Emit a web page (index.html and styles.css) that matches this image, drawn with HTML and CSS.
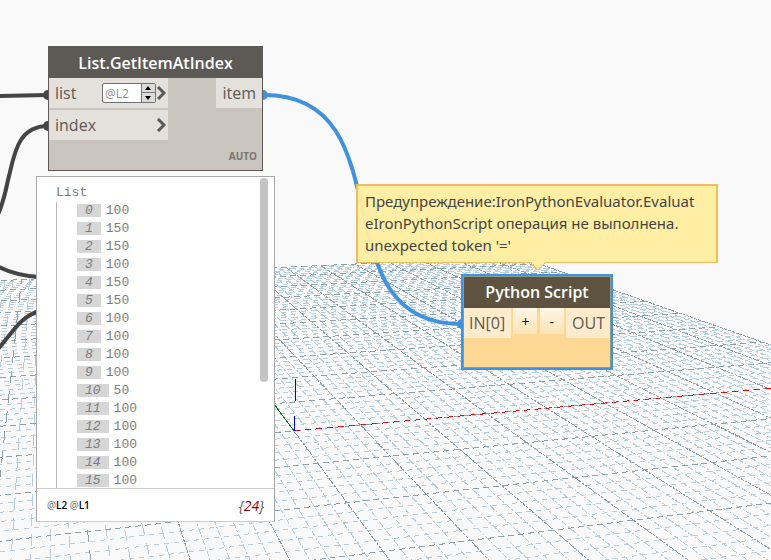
FILE: index.html
```html
<!DOCTYPE html>
<html lang="ru">
<head>
  <meta charset="utf-8">
  <title>Dynamo</title>
  <link rel="stylesheet" href="styles.css">
</head>
<body>
  <main class="workspace">
    <svg class="grid" id="grid" aria-hidden="true"></svg>

    <svg class="wires" aria-hidden="true">
      <path class="wire" d="M-2 96 L48 95" />
      <path class="wire" d="M48 126 C16 126 14 158 8 180 C5 195 2 206 -3 217" />
      <path class="wire" d="M-3 266 C8 272 20 276 40 277" />
      <path class="wire" d="M-3 350 C12 334 20 316 40 311" />
      <circle class="pin" cx="48" cy="95" r="5" />
      <circle class="pin" cx="48" cy="126" r="5" />
      <path class="wire active" d="M264 95 C409 95 316 324 461 324" />
      <circle class="pin active" cx="263" cy="95" r="5" />
      <circle class="pin active" cx="462" cy="324" r="5" />
    </svg>

    <section class="node list-node">
      <h2>List.GetItemAtIndex</h2>
      <div class="ports">
        <div class="inputs">
          <div class="port">
            <label for="level">list</label>
            <div class="spinner">
              <input type="text" id="level" value="@L2">
              <div class="steps">
                <button type="button" aria-label="Up"><svg viewBox="0 0 12 8"><path d="M3 6 L6 2 L9 6 Z" /></svg></button>
                <button type="button" aria-label="Down"><svg viewBox="0 0 12 8"><path d="M3 2 L6 6 L9 2 Z" /></svg></button>
              </div>
            </div>
            <svg class="chevron" viewBox="0 0 10 14"><path d="M2 1 L8 7 L2 13" /></svg>
          </div>
          <div class="port">
            <span>index</span>
            <svg class="chevron" viewBox="0 0 10 14"><path d="M2 1 L8 7 L2 13" /></svg>
          </div>
        </div>
        <div class="port">item</div>
      </div>
      <div class="lacing">AUTO</div>
    </section>

    <section class="preview">
      <div class="tree">
        <div class="root">List</div>
        <ul>
          <li><i>0</i>100</li>
          <li><i>1</i>150</li>
          <li><i>2</i>150</li>
          <li><i>3</i>100</li>
          <li><i>4</i>150</li>
          <li><i>5</i>150</li>
          <li><i>6</i>100</li>
          <li><i>7</i>100</li>
          <li><i>8</i>100</li>
          <li><i>9</i>100</li>
          <li><i>10</i>50</li>
          <li><i>11</i>100</li>
          <li><i>12</i>100</li>
          <li><i>13</i>100</li>
          <li><i>14</i>100</li>
          <li><i>15</i>100</li>
        </ul>
        <div class="thumb"></div>
      </div>
      <footer>
        <div class="levels"><span>@</span>L2 <span>@</span>L1</div>
        <div class="count">{<b>24</b>}</div>
      </footer>
    </section>

    <div class="warning" role="alert">
      Предупреждение:IronPythonEvaluator.EvaluateIronPythonScript операция не выполнена. unexpected token '='
      <svg class="tail" viewBox="0 0 14 9"><path class="fill" d="M0 0 L7 7 L14 0 Z" /><path class="edge" d="M0 1 L7 8 L14 1" /></svg>
    </div>

    <section class="node python-node">
      <h2>Python Script</h2>
      <div class="ports">
        <div class="port">IN[0]</div>
        <button type="button">+</button>
        <button type="button">-</button>
        <div class="port">OUT</div>
      </div>
    </section>
  </main>

  <script src="grid.js"></script>
</body>
</html>
```

FILE: styles.css
```css
* {
  box-sizing: border-box;
}

body {
  margin: 0;
  background: #f9f9f9;
  font-family: 'Open Sans', 'Noto Sans', sans-serif;
  color: #5d5a56;
}

.workspace {
  position: relative;
  height: 100vh;
  overflow: hidden;
}

.grid,
.wires {
  position: absolute;
  top: 0;
  left: 0;
  width: 100%;
  height: 100%;
}

.grid path {
  fill: none;
  stroke-width: 1;
  shape-rendering: crispEdges;
}

.grid .minor { stroke: #b5cfdf; }
.grid .major { stroke: #8b9fac; }
.grid .axis-x { stroke: #f00; }
.grid .axis-y { stroke: #008000; }
.grid .axis-z { stroke: #0000c8; }

.wire {
  fill: none;
  stroke: #444;
  stroke-width: 4;
}

.pin {
  fill: #444;
}

.wire.active { stroke: #4092dc; }
.pin.active { fill: #4092dc; }

/* nodes */
.node {
  position: absolute;
}

.node h2 {
  margin: 0;
  height: 31px;
  line-height: 32px;
  font-size: 16px;
  font-weight: 600;
  text-align: center;
  color: #fff;
}

.ports {
  display: flex;
}

.port {
  display: flex;
  align-items: center;
  height: 30px;
  padding: 0 6px;
  font-size: 16px;
  line-height: 32px;
}

.list-node {
  left: 48px;
  top: 46px;
  width: 215px;
  border: 1px solid #5d5a56;
  background: #cac5be;
}

.list-node h2 {
  background: #5d5a56;
}

.list-node .ports {
  justify-content: space-between;
  align-items: flex-start;
}

.list-node .port {
  background: #e4e0dc;
}

.inputs {
  display: grid;
  gap: 2px;
  width: 119px;
}

.inputs .port {
  padding-right: 0;
}

.spinner {
  display: flex;
  margin-left: auto;
  width: 54px;
  height: 20px;
  border: 1px solid #707070;
  border-radius: 2px;
  background: #fff;
}

.spinner input {
  width: 38px;
  padding: 0 2px;
  border: 0;
  background: none;
  font: 12px 'Open Sans', sans-serif;
  color: #8a8a8a;
  outline: none;
}

.steps {
  display: grid;
  width: 14px;
}

.steps button {
  display: block;
  height: 9px;
  padding: 0;
  border: 1px solid #777;
  border-width: 0 0 1px 1px;
  background: #dcdcdc;
}

.steps button:last-child {
  border-bottom: 0;
}

.steps svg {
  display: block;
  width: 12px;
  height: 8px;
}

.chevron {
  width: 10px;
  height: 14px;
  margin-right: 2px;
}

.inputs span + .chevron {
  margin-left: auto;
}

.chevron path {
  fill: none;
  stroke: #5d5a56;
  stroke-width: 3;
}

.lacing {
  height: 30px;
  padding-right: 5px;
  line-height: 32px;
  font-size: 10px;
  font-weight: 700;
  text-align: right;
  color: #7a756f;
}

.python-node {
  left: 461px;
  top: 274px;
  width: 152px;
  height: 96px;
  border: 2px solid #4092dc;
  outline: 1px solid #8c9a8f;
  outline-offset: -3px;
  background: #fcd894;
}

.python-node h2 {
  height: 32px;
  background: #5e5341;
}

.python-node .ports {
  justify-content: space-between;
}

.python-node .port {
  background: #fdebcb;
}

.python-node button {
  width: 24px;
  height: 26px;
  padding: 0;
  border: 0;
  background: linear-gradient(#fef6e6, #fce3b3);
  font: 14px 'Open Sans', sans-serif;
  color: #000;
}

/* value preview */
.preview {
  position: absolute;
  left: 36px;
  top: 176px;
  width: 239px;
  border: 1px solid #a9a9a9;
  border-bottom-color: #ccc;
  background: #fff;
}

.tree {
  position: relative;
  height: 311px;
  padding: 7px 19px;
  overflow: hidden;
  font: 13px/18px 'Liberation Mono', monospace;
  color: #7d7d7d;
}

.tree ul {
  margin: 0;
  padding: 0 0 0 20px;
  border-left: 1px solid #bbb;
  list-style: none;
}

.tree i {
  display: inline-block;
  height: 13px;
  margin-right: 5px;
  padding: 0 8px;
  line-height: 14px;
  background: #d6d6d6;
}

.tree li {
  height: 18px;
}

.thumb {
  position: absolute;
  top: 1px;
  right: 6px;
  width: 8px;
  height: 204px;
  border-radius: 4px;
  background: #c3c3c3;
}

.preview footer {
  display: flex;
  justify-content: space-between;
  align-items: center;
  height: 33px;
  padding: 0 10px;
  border-top: 1px solid #ccc;
}

.levels {
  font-size: 10px;
  font-weight: 600;
  color: #000;
}

.levels span {
  font-weight: 400;
  color: #666;
}

.count {
  font-size: 14px;
  font-style: italic;
}

.count b {
  font-weight: 400;
  color: #8b0000;
}

/* warning bubble */
.warning {
  position: absolute;
  left: 356px;
  top: 184px;
  width: 362px;
  padding: 4px 18px 6px 7px;
  border: 2px solid #f2bd5c;
  border-bottom-width: 1px;
  background: rgba(255, 238, 160, 0.96);
  font: 15px/22px 'Noto Sans', sans-serif;
  overflow-wrap: anywhere;
  color: #444;
}

.tail {
  position: absolute;
  left: 173px;
  top: 100%;
  width: 14px;
  height: 9px;
}

.tail .fill {
  fill: #ffeea0;
}

.tail .edge {
  fill: none;
  stroke: #f2bd5c;
}
```

FILE: grid.js
```js
// Ground plane drawn in perspective: 20 x 20 major cells, 5 minor steps in each
const svg = document.getElementById('grid');

const origin = [294, 431];
const vanishX = [4078, 90];
const vanishY = [42, 90];
const stepX = 0.0179;
const stepY = 0.087;
const size = 10;

function weight(i, j) {
  return 1 + i * stepX + j * stepY;
}

function project(i, j) {
  const w = weight(i, j);
  return [0, 1].map(k => (origin[k] + i * stepX * vanishX[k] + j * stepY * vanishY[k]) / w);
}

function draw(cls, from, to, dash, offset) {
  const path = document.createElementNS('http://www.w3.org/2000/svg', 'path');
  path.setAttribute('class', cls);
  path.setAttribute('d', 'M' + from.join(' ') + ' L' + to.join(' '));
  if (dash) {
    path.setAttribute('stroke-dasharray', dash);
    path.setAttribute('stroke-dashoffset', offset || 0);
  }
  svg.appendChild(path);
}

function drawLines(cls, wanted) {
  for (let n = -size * 5; n <= size * 5; n++) {
    if ((n % 5 === 0) !== wanted) continue;
    const k = n / 5;
    const shift = Math.abs(n * 7) % 11;

    // keep the near end in front of the camera
    const left = Math.max(-size, (0.08 - 1 - k * stepY) / stepX);
    if (left < size) {
      draw(cls, project(size, k), project(left, k), wanted ? '6 4' : '5 5', shift);
    }

    const near = Math.max(-size, (0.3 - 1 - k * stepX) / stepY);
    const dash = k < -2 ? '12 8' : (wanted ? '3 1' : '6 2 2 2');
    draw(cls, project(k, size), project(k, near), dash, shift);
  }
}

drawLines('minor', false);
drawLines('major', true);

draw('axis-x', origin, project(size, 0), '6 5');
draw('axis-y', origin, project(0, size));
draw('axis-z', [294.5, 416], [294.5, 431]);
draw('axis-z', [295.5, 379], [295.5, 401]);
```
